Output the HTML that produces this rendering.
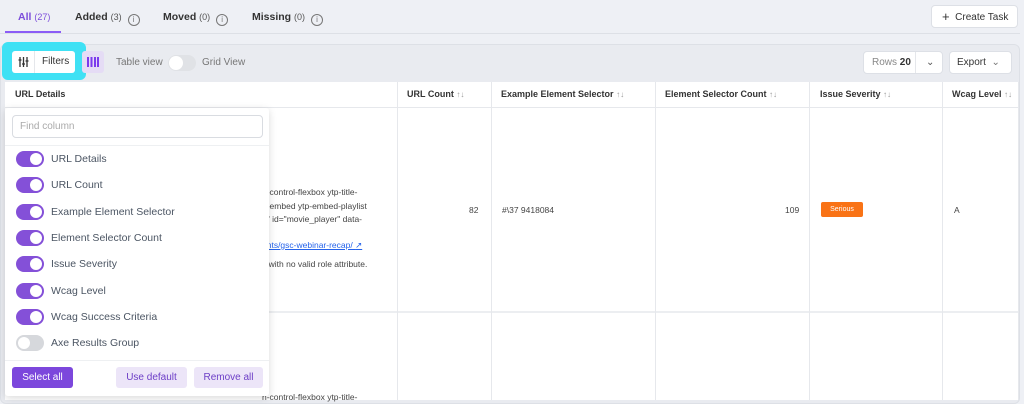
<!DOCTYPE html>
<html><head><style>
*{box-sizing:border-box;margin:0;padding:0}
body{width:1024px;height:400px;overflow:hidden;background:#eef0f5;font-family:"Liberation Sans",sans-serif;position:relative;color:#374151}
.a{position:absolute}
.tab{font-size:10.5px;font-weight:bold;color:#333;top:11px}
.tab small{font-weight:normal;font-size:9px;color:#555}
.info{display:inline-block;width:12px;height:12px;border:1px solid #777;border-radius:50%;font-size:8px;text-align:center;line-height:10px;color:#777;margin-left:6px;vertical-align:-2px;font-weight:normal}
.th{top:82px;height:25px;font-size:9px;font-weight:bold;color:#333;line-height:25px;padding-left:10px}
.srt{color:#999;font-weight:normal;font-size:8px}
.vl{top:82px;width:1px;height:318px;background:#e6e8ec}
.cell{font-size:8.5px;color:#444}
.tg{position:absolute;left:16px;width:28px;height:16px;border-radius:8px;background:#8450d8}
.tg:after{content:"";position:absolute;right:2px;top:2px;width:12px;height:12px;border-radius:50%;background:#fff}
.tg.off{background:#d6d8dc}.tg.off:after{right:auto;left:2px}
.lb{position:absolute;left:51px;font-size:10.5px;color:#4b5563;line-height:16px}
.btn{position:absolute;top:367px;height:21px;border-radius:3px;font-size:10px;text-align:center;line-height:21px}
</style></head><body>
<div class="a tab" style="left:18px;color:#7c4ddb">All <small style="color:#7c4ddb">(27)</small></div>
<div class="a" style="left:5px;top:31px;width:56px;height:2px;background:#8b5cf6"></div>
<div class="a tab" style="left:75px">Added <small>(3)</small><span class="info">i</span></div>
<div class="a tab" style="left:163px">Moved <small>(0)</small><span class="info">i</span></div>
<div class="a tab" style="left:252px">Missing <small>(0)</small><span class="info">i</span></div>
<div class="a" style="left:0;top:33px;width:1020px;height:1px;background:#dde0e6"></div>
<div class="a" style="left:931px;top:5px;width:87px;height:23px;background:#fff;border:1px solid #dde0e6;border-radius:4px;font-size:10px;line-height:21px;padding-left:10px;color:#333"><span style="font-size:13px;vertical-align:-1px">+</span>&nbsp; Create Task</div>

<div class="a" style="left:0;top:44px;width:1020px;height:360px;background:#e9ebf0;border:1px solid #dde0e6;border-radius:6px"></div>
<div class="a" style="left:2px;top:42px;width:84px;height:38px;background:#3fe1f4;border-radius:6px"></div>
<div class="a" style="left:12px;top:51px;width:63px;height:22px;background:#fff;border-radius:3px;font-size:10px;line-height:22px">
<svg style="position:absolute;left:6px;top:6px" width="11" height="10" viewBox="0 0 11 10" stroke="#333" stroke-width="1.3"><path d="M2 0V10M5.5 0V10M9 0V10M0.5 3H3.5M4 7H7M7.5 4H10.5"/></svg>
<span style="position:absolute;left:22px;top:0;width:1px;height:22px;background:#e5e7eb"></span><span style="position:absolute;left:30px;color:#333">Filters</span></div>
<div class="a" style="left:82px;top:51px;width:22px;height:22px;background:#e5dcf5;border-radius:3px"><svg style="position:absolute;left:5px;top:6px" width="12" height="10" stroke="#7c3aed" stroke-width="2"><path d="M1 0V10M4.5 0V10M8 0V10M11 0V10"/></svg></div>
<div class="a" style="left:116px;top:57px;font-size:10px;color:#777">Table view</div>
<div class="a" style="left:168px;top:55px;width:28px;height:16px;border-radius:8px;background:#e0e2e6"><div style="position:absolute;left:1px;top:1px;width:14px;height:14px;border-radius:50%;background:#fff"></div></div>
<div class="a" style="left:202px;top:57px;font-size:10px;color:#777">Grid View</div>
<div class="a" style="left:863px;top:51px;width:80px;height:23px;background:#fff;border:1px solid #dde0e6;border-radius:4px;font-size:10px;line-height:21px;padding-left:8px;color:#888">Rows <b style="color:#333">20</b><span style="position:absolute;left:51px;top:0;width:1px;height:21px;background:#e5e7eb"></span><span style="position:absolute;left:62px;color:#555">⌄</span></div>
<div class="a" style="left:949px;top:51px;width:63px;height:23px;background:#fff;border:1px solid #dde0e6;border-radius:4px;font-size:10px;line-height:21px;padding-left:7px;color:#333">Export &nbsp;<span style="color:#777">⌄</span></div>

<div class="a" style="left:5px;top:82px;width:1013px;height:318px;background:#fff"></div>
<div class="a" style="left:5px;top:107px;width:1013px;height:1px;background:#e6e8ec"></div>
<div class="a" style="left:5px;top:311px;width:1013px;height:2px;background:#eceef1"></div>
<div class="a th" style="left:5px">URL Details</div>
<div class="a th" style="left:397px">URL Count <span class="srt">↑↓</span></div>
<div class="a th" style="left:491px">Example Element Selector <span class="srt">↑↓</span></div>
<div class="a th" style="left:655px">Element Selector Count <span class="srt">↑↓</span></div>
<div class="a th" style="left:810px">Issue Severity <span class="srt">↑↓</span></div>
<div class="a th" style="left:942px">Wcag Level <span class="srt">↑↓</span></div>
<div class="a vl" style="left:397px"></div><div class="a vl" style="left:491px"></div><div class="a vl" style="left:655px"></div><div class="a vl" style="left:809px"></div><div class="a vl" style="left:942px"></div><div class="a vl" style="left:1018px"></div>
<div class="a cell" style="left:469px;top:205px">82</div>
<div class="a cell" style="left:502px;top:205px">#\37 9418084</div>
<div class="a cell" style="left:785px;top:205px">109</div>
<div class="a" style="left:821px;top:202px;width:42px;height:15px;background:#f97316;border-radius:2px;color:#fff;font-size:7px;text-align:center;line-height:15px">Serious</div>
<div class="a cell" style="left:954px;top:205px">A</div>
<div class="a cell" style="left:262px;top:186px;line-height:13.5px;white-space:nowrap">n-control-flexbox ytp-title-<br>p-embed ytp-embed-playlist<br>1" id="movie_player" data-</div>
<div class="a cell" style="left:262px;top:240px;color:#2563eb;text-decoration:underline">ents/gsc-webinar-recap/ <span style="text-decoration:none">↗</span></div>
<div class="a cell" style="left:262px;top:259px">v with no valid role attribute.</div>
<div class="a cell" style="left:262px;top:392px">n-control-flexbox ytp-title-</div>

<div class="a" style="left:5px;top:108px;width:264px;height:288px;background:#fff;box-shadow:0 2px 8px rgba(0,0,0,.15);border-radius:3px"></div>
<div class="a" style="left:12px;top:115px;width:251px;height:23px;border:1px solid #d9dce1;border-radius:4px;font-size:10px;color:#aaa;line-height:21px;padding-left:7px">Find column</div>
<div class="a" style="left:5px;top:145px;width:264px;height:1px;background:#eef0f2"></div>
<div class="tg" style="top:151px"></div><div class="lb" style="top:151px">URL Details</div>
<div class="tg" style="top:177px"></div><div class="lb" style="top:177px">URL Count</div>
<div class="tg" style="top:204px"></div><div class="lb" style="top:204px">Example Element Selector</div>
<div class="tg" style="top:230px"></div><div class="lb" style="top:230px">Element Selector Count</div>
<div class="tg" style="top:256px"></div><div class="lb" style="top:256px">Issue Severity</div>
<div class="tg" style="top:283px"></div><div class="lb" style="top:283px">Wcag Level</div>
<div class="tg" style="top:309px"></div><div class="lb" style="top:309px">Wcag Success Criteria</div>
<div class="tg off" style="top:335px"></div><div class="lb" style="top:335px">Axe Results Group</div>
<div class="a" style="left:5px;top:360px;width:264px;height:1px;background:#eef0f2"></div>
<div class="btn" style="left:12px;width:61px;background:#7c47dc;color:#fff">Select all</div>
<div class="btn" style="left:116px;width:71px;background:#ece5f8;color:#6d3fc7">Use default</div>
<div class="btn" style="left:194px;width:69px;background:#ece5f8;color:#6d3fc7">Remove all</div>
</body></html>
